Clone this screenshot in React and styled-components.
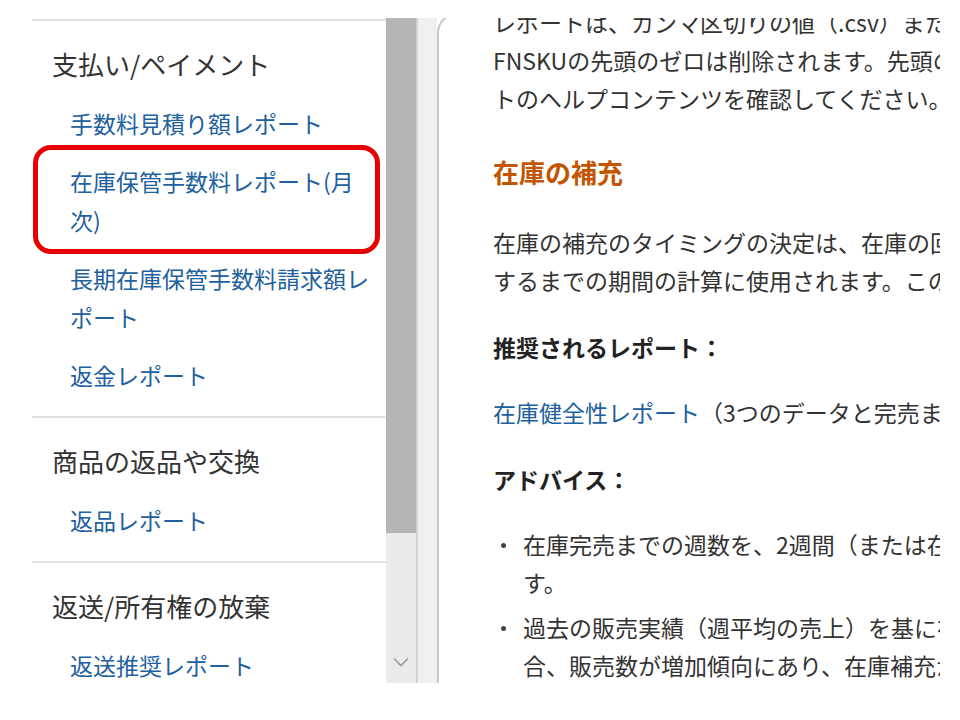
import React from "react";
import styled, { createGlobalStyle } from "styled-components";

const GlobalStyle = createGlobalStyle`
  body {
    margin: 0;
    background: #ffffff;
    font-family: "Noto Sans CJK JP", "Noto Sans", sans-serif;
  }
`;

const sections = [
  {
    title: "支払い/ペイメント",
    links: [
      { text: "手数料見積り額レポート" },
      { text: "在庫保管手数料レポート(月次)", marked: true },
      { text: "長期在庫保管手数料請求額レポート" },
      { text: "返金レポート" },
    ],
  },
  {
    title: "商品の返品や交換",
    links: [{ text: "返品レポート" }],
  },
  {
    title: "返送/所有権の放棄",
    links: [{ text: "返送推奨レポート" }],
  },
];

const App = () => {
  return (
    <>
      <GlobalStyle />
      <Frame>
        <Sidebar>
          {sections.map((section) => (
            <Section key={section.title}>
              <SectionTitle>{section.title}</SectionTitle>
              <LinkList>
                {section.links.map((link) => (
                  <LinkItem key={link.text}>
                    <NavLink href="#">{link.text}</NavLink>
                    {link.marked && <Highlight />}
                  </LinkItem>
                ))}
              </LinkList>
            </Section>
          ))}
        </Sidebar>
        <Scrollbar>
          <Thumb />
          <Track>
            <svg width="16" height="10" viewBox="0 0 16 10">
              <path d="M1 1.5 L8 8.5 L15 1.5" fill="none" stroke="#9a9a9a" strokeWidth="1.6" />
            </svg>
          </Track>
        </Scrollbar>
        <Gutter />
        <Content>
          <Para first>
            <Line>レポートは、カンマ区切りの値（.csv）またはタブ区切りの値（.txt）形式です。</Line>
            <Line>FNSKUの先頭のゼロは削除されます。先頭のゼロを表示するには、スプレッドシー</Line>
            <Line>トのヘルプコンテンツを確認してください。</Line>
          </Para>
          <Heading>在庫の補充</Heading>
          <Para>
            <Line>在庫の補充のタイミングの決定は、在庫の回転率の最適化と、在庫が完売</Line>
            <Line>するまでの期間の計算に使用されます。このレポートを活用してください。</Line>
          </Para>
          <Label>推奨されるレポート：</Label>
          <Para>
            <Line>
              <InlineLink href="#">在庫健全性レポート</InlineLink>（3つのデータと完売までの週数）
            </Line>
          </Para>
          <Label>アドバイス：</Label>
          <Bullets>
            <Bullet>
              <Dot />
              <div>
                <Line>在庫完売までの週数を、2週間（または在庫補充にかかる期間）以上に維持しま</Line>
                <Line>す。</Line>
              </div>
            </Bullet>
            <Bullet>
              <Dot />
              <div>
                <Line>過去の販売実績（週平均の売上）を基に在庫を補充します。需要が高まる場</Line>
                <Line>合、販売数が増加傾向にあり、在庫補充が必要になります。</Line>
              </div>
            </Bullet>
          </Bullets>
        </Content>
      </Frame>
    </>
  );
};

const Frame = styled.div`
  display: flex;
  margin: 18px 0 0 32px;
  width: 908px;
  height: 665px;
  overflow: hidden;
  background: #ffffff;
`;

const Sidebar = styled.nav`
  width: 354px;
  flex-shrink: 0;
`;

const Section = styled.div`
  border-top: 2px solid #e2e2e2;
  margin-top: 1px;
  padding: 23px 14px 21px 20px;

  & + & {
    margin-top: 0;
  }
`;

const SectionTitle = styled.h3`
  margin: 0;
  font-size: 26px;
  line-height: 40px;
  font-weight: 400;
  color: #333333;
`;

const LinkList = styled.ul`
  list-style: none;
  margin: 20px 0 0;
  padding: 0 0 0 18px;
  display: flex;
  flex-direction: column;
  gap: 19px;
`;

const LinkItem = styled.li`
  position: relative;
`;

const NavLink = styled.a`
  font-size: 23px;
  line-height: 39px;
  color: #21609e;
  text-decoration: none;
`;

const Highlight = styled.span`
  position: absolute;
  top: -17px;
  right: -8px;
  bottom: -14px;
  left: -37px;
  border: 5px solid #e60000;
  border-radius: 18px;
  pointer-events: none;
`;

const Scrollbar = styled.div`
  width: 30px;
  flex-shrink: 0;
  display: flex;
  flex-direction: column;
  border-right: 2px solid #d2d2d2;
`;

const Thumb = styled.div`
  height: 515px;
  background: #b5b5b5;
`;

const Track = styled.div`
  flex: 1;
  background: #ebebeb;
  display: flex;
  align-items: flex-end;
  justify-content: center;
  padding-bottom: 16px;
`;

const Gutter = styled.div`
  width: 19px;
  flex-shrink: 0;
  background: #f0f0f0;
`;

const Content = styled.main`
  flex: 1;
  margin-top: -5px;
  border-left: 2px solid #c8c8c8;
  border-top: 2px solid #c8c8c8;
  border-top-left-radius: 20px;
  padding-left: 54px;
  background: #ffffff;
  color: #333333;
  font-size: 23px;
  line-height: 38px;
  overflow: hidden;
`;

const Para = styled.div`
  margin: ${(props) => (props.first ? "-12px 0 0" : "0")};
`;

const Line = styled.div`
  white-space: nowrap;
`;

const Heading = styled.h2`
  margin: 36px 0 32px;
  font-size: 26px;
  line-height: 38px;
  font-weight: 700;
  color: #c45500;
`;

const Label = styled.div`
  margin: 29px 0 27px;
  font-weight: 700;
  color: #222222;
  white-space: nowrap;
`;

const InlineLink = styled.a`
  color: #21609e;
  text-decoration: none;
`;

const Bullets = styled.ul`
  list-style: none;
  margin: 0;
  padding: 0;
  display: flex;
  flex-direction: column;
  gap: 7px;
`;

const Bullet = styled.li`
  display: flex;
`;

const Dot = styled.span`
  width: 30px;
  flex-shrink: 0;
  position: relative;

  &::before {
    content: "";
    position: absolute;
    left: 8px;
    top: 18px;
    width: 5px;
    height: 5px;
    border-radius: 50%;
    background: #444444;
  }
`;

export default App;
